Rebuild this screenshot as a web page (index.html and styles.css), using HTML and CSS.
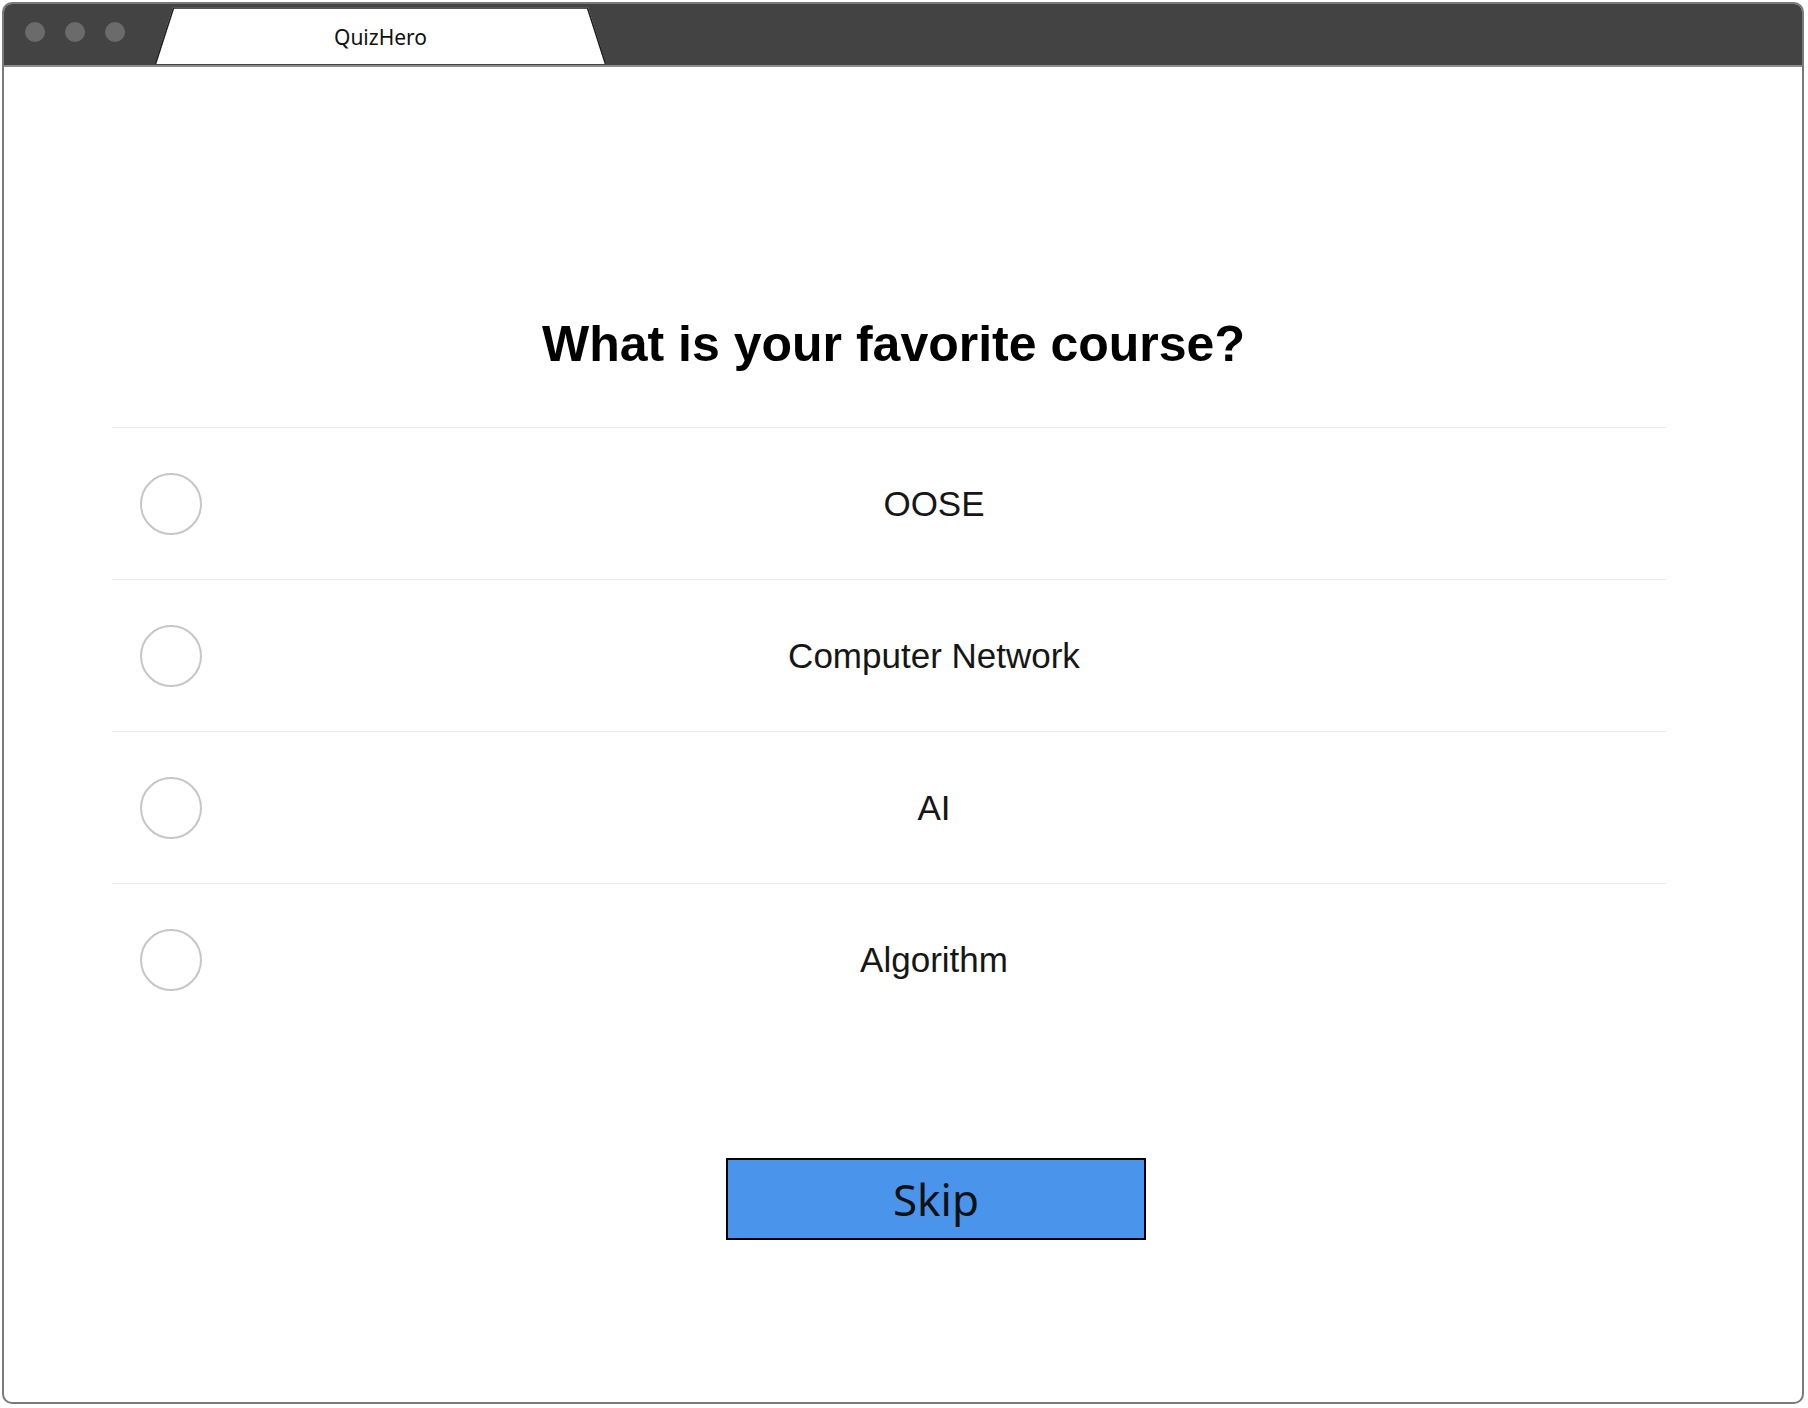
FILE: index.html
```html
<!DOCTYPE html>
<html lang="en">
<head>
<meta charset="utf-8">
<title>QuizHero</title>
<link rel="stylesheet" href="styles.css">
</head>
<body>
<div class="window">
  <div class="titlebar">
    <div class="dots">
      <span class="dot"></span><span class="dot"></span><span class="dot"></span>
    </div>
    <div class="tab">
      <svg class="tab-shape" width="451" height="57" viewBox="0 0 451 57" aria-hidden="true">
        <polygon points="18,0 433,0 451,57 0,57" fill="#ffffff"/>
        <polyline points="0.5,57 18.5,1 432.5,1 450.5,57" fill="none" stroke="#1e1e1e" stroke-width="1.6"/>
      </svg>
      <span class="tab-label">QuizHero</span>
    </div>
  </div>
  <main class="quiz">
    <h1 class="question">What is your favorite course?</h1>
    <ul class="options">
      <li class="option"><span class="radio"></span><span class="option-label">OOSE</span></li>
      <li class="option"><span class="radio"></span><span class="option-label">Computer Network</span></li>
      <li class="option"><span class="radio"></span><span class="option-label">AI</span></li>
      <li class="option"><span class="radio"></span><span class="option-label">Algorithm</span></li>
    </ul>
    <div class="actions">
      <button class="skip">Skip</button>
    </div>
  </main>
</div>
</body>
</html>
```
FILE: styles.css
```css
html, body {
  margin: 0;
  padding: 0;
  background: #ffffff;
}
body {
  width: 1808px;
  height: 1408px;
  overflow: hidden;
  font-family: "Liberation Sans", Arial, sans-serif;
}
.window {
  box-sizing: border-box;
  width: 1802px;
  height: 1402px;
  margin: 2px 4px 4px 2px;
  border: 2px solid #7a7a7a;
  border-radius: 10px;
  overflow: hidden;
  background: #ffffff;
}
.titlebar {
  height: 61px;
  background: #434343;
  border-bottom: 2px solid #8c8c8c;
  display: flex;
  align-items: flex-start;
  padding-left: 21px;
}
.dots {
  display: flex;
  gap: 20px;
  margin-top: 18px;
}
.dot {
  width: 20px;
  height: 20px;
  border-radius: 50%;
  background: #6b6b6b;
}
.tab {
  position: relative;
  width: 451px;
  height: 57px;
  margin-left: 30px;
  margin-top: 3px;
  display: flex;
  justify-content: center;
  align-items: center;
}
.tab-shape {
  position: absolute;
  left: 0;
  top: 0;
}
.tab-label {
  position: relative;
  font-family: "Noto Sans", "Open Sans", sans-serif;
  font-size: 21px;
  color: #111111;
  padding-top: 3px;
}
.quiz {
  width: 1554px;
  margin-left: 108px;
}
.question {
  margin: 248px 0 0 0;
  padding-left: 9px;
  font-size: 50px;
  line-height: 58px;
  font-weight: bold;
  color: #000000;
  text-align: center;
}
.options {
  list-style: none;
  margin: 54px 0 0 0;
  padding: 0;
}
.option {
  height: 151px;
  border-top: 1px solid #ebebeb;
  display: flex;
  align-items: center;
}
.radio {
  box-sizing: border-box;
  width: 62px;
  height: 62px;
  margin-left: 28px;
  border: 2px solid #c6c6c6;
  border-radius: 50%;
  flex: none;
}
.option-label {
  flex: 1;
  text-align: center;
  font-size: 35px;
  color: #161616;
  padding-top: 1px;
}
.actions {
  display: flex;
  justify-content: center;
  padding-left: 94px;
  margin-top: 123px;
}
.skip {
  box-sizing: border-box;
  width: 420px;
  height: 82px;
  background: #4a94ec;
  border: 2px solid #000000;
  border-radius: 0;
  font-family: "Noto Sans", "Open Sans", sans-serif;
  font-size: 44px;
  color: #111111;
  padding: 0;
  cursor: pointer;
}
```
